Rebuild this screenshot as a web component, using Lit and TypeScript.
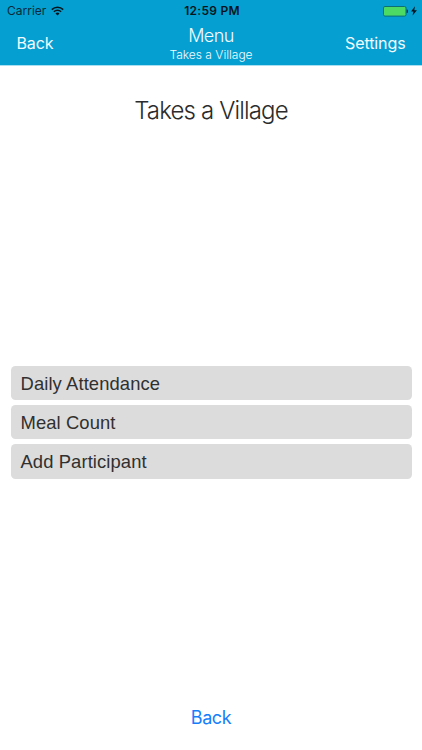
import { LitElement, html, css } from "lit";
import { customElement } from "lit/decorators.js";

@customElement("status-bar")
class StatusBar extends LitElement {
  static styles = css`
    :host {
      display: grid;
      grid-template-columns: 1fr auto 1fr;
      align-items: center;
      height: 22px;
      padding: 0 5px 0 7px;
      font: 12px/22px Inter, sans-serif;
      color: #082a3a;
    }
    .carrier { display: flex; align-items: center; gap: 5px; letter-spacing: 0; }
    .carrier svg { margin-top: -1px; }
    .time { font-weight: 600; font-size: 12px; letter-spacing: 0.25px; color: #04151d; }
    .power { display: flex; justify-content: flex-end; align-items: center; gap: 3px; }
    svg { display: block; }
  `;
  render() {
    return html`
      <div class="carrier">
        <span>Carrier</span>
        <svg width="13" height="10" viewBox="0 0 13 10" fill="none" stroke="#04151d" stroke-width="1.6">
          <path d="M0.8 3.6a8.1 8.1 0 0 1 11.4 0" />
          <path d="M2.9 5.8a5.1 5.1 0 0 1 7.2 0" />
          <path d="M6.5 9.4L4.5 7.4a2.8 2.8 0 0 1 4 0z" fill="#04151d" stroke="none" />
        </svg>
      </div>
      <div class="time">12:59 PM</div>
      <div class="power">
        <svg width="25" height="11" viewBox="0 0 25 11">
          <rect x="0.5" y="0.5" width="22.5" height="9.6" rx="1.4" fill="#4cd964" stroke="#0b6f73" />
          <path d="M23.7 3.6h.3a1 1 0 0 1 1 1v1.4a1 1 0 0 1-1 1h-.3z" fill="#04303f" />
        </svg>
        <svg width="6" height="10" viewBox="0 0 6 10" fill="#04151d">
          <path d="M3.9 0.3L0.1 5.6h2.3L1.6 9.6L5.9 4.2H3.3z" />
        </svg>
      </div>
    `;
  }
}

@customElement("nav-bar")
class NavBar extends LitElement {
  static styles = css`
    :host {
      display: grid;
      grid-template-columns: 1fr auto 1fr;
      height: 43px;
      padding: 0 16.5px;
      color: #f2fbff;
      font-family: Inter, sans-serif;
    }
    .action { font-size: 16px; line-height: 43px; letter-spacing: -0.1px; }
    .right { text-align: right; }
    .titles { text-align: center; font-weight: 300; }
    .title { font-size: 18px; line-height: 24px; padding-top: 2px; letter-spacing: -0.6px; }
    .subtitle { font-size: 12px; line-height: 14px; }
  `;
  render() {
    return html`
      <div class="action">Back</div>
      <div class="titles">
        <div class="title">Menu</div>
        <div class="subtitle">Takes a Village</div>
      </div>
      <div class="action right">Settings</div>
    `;
  }
}

@customElement("app-root")
class AppRoot extends LitElement {
  static styles = css`
    :host {
      display: flex;
      flex-direction: column;
      height: 750px;
      background: #fff;
      overflow: hidden;
    }
    .header { background: #059fd1; height: 65px; border-bottom: 1px solid #a9dff0; box-sizing: content-box; }
    .heading {
      margin: 28px 0 0;
      text-align: center;
      font: 300 24px/34px Inter, sans-serif;
      letter-spacing: -0.85px;
      color: #2b2b2b;
    }
    .menu {
      display: flex;
      flex-direction: column;
      gap: 5px;
      margin: 237.5px 10.5px 0;
    }
    .item {
      height: 34.4px;
      border-radius: 4.5px;
      background: #dcdcdc;
      padding-left: 10px;
      font: 18.4px/35px "Liberation Sans", Arial, sans-serif;
      letter-spacing: 0.1px;
      color: #303030;
    }
    .back {
      margin-top: auto;
      padding-bottom: 19px;
      text-align: center;
      font: 18px/26px Inter, sans-serif;
      letter-spacing: -0.4px;
      color: #177efb;
    }
  `;
  private items = ["Daily Attendance", "Meal Count", "Add Participant"];
  render() {
    return html`
      <div class="header">
        <status-bar></status-bar>
        <nav-bar></nav-bar>
      </div>
      <div class="heading">Takes a Village</div>
      <div class="menu">${this.items.map((t) => html`<div class="item">${t}</div>`)}</div>
      <div class="back">Back</div>
    `;
  }
}
